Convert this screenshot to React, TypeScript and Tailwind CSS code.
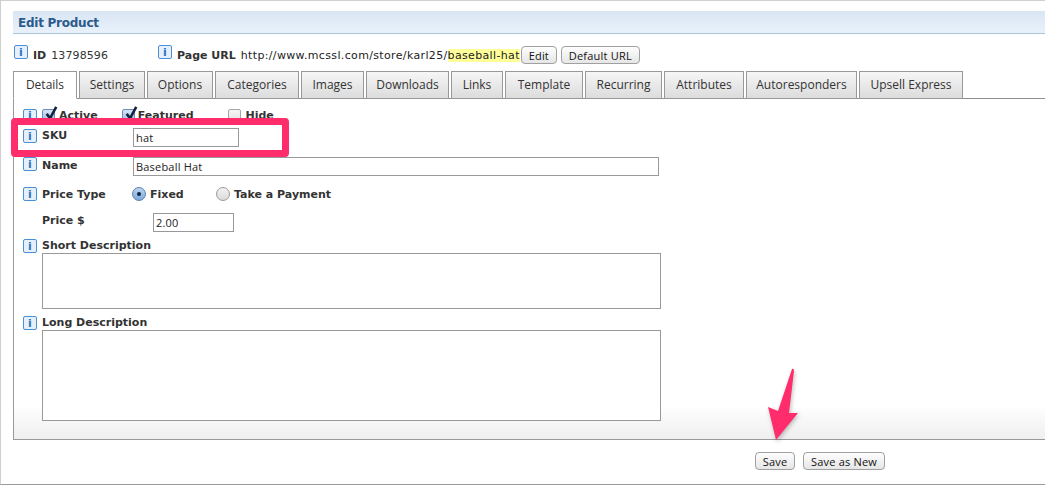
const tabs = [
  { label: "Details", w: "w-[64px]" },
  { label: "Settings", w: "w-[66px]" },
  { label: "Options", w: "w-[66px]" },
  { label: "Categories", w: "w-[84px]" },
  { label: "Images", w: "w-[63px]" },
  { label: "Downloads", w: "w-[83px]" },
  { label: "Links", w: "w-[52px]" },
  { label: "Template", w: "w-[78px]" },
  { label: "Recurring", w: "w-[77px]" },
  { label: "Attributes", w: "w-[80px]" },
  { label: "Autoresponders", w: "w-[111px]" },
  { label: "Upsell Express", w: "w-[104px]" },
];

function InfoIcon({ className = "" }: { className?: string }) {
  return (
    <span className={`flex h-[14px] w-[14px] shrink-0 items-center justify-center rounded-[2px] border border-[#4a90d6] bg-[#e6f0fb] font-['DejaVu_Sans',sans-serif] text-[11px] leading-none font-bold text-[#2f74bd] ${className}`}>
      i
    </span>
  );
}

function Checkbox({ checked }: { checked?: boolean }) {
  return (
    <span className={`relative block h-[13px] w-[13px] shrink-0 rounded-[2px] border ${checked ? "border-[#6d8db5] bg-gradient-to-b from-[#d5e4f5] to-[#9dbde4]" : "border-[#a5a5a5] bg-gradient-to-b from-[#f6f6f6] to-[#e2e2e2]"}`}>
      {checked && (
        <svg viewBox="0 0 16 18" className="absolute -top-[5px] left-[1px] h-[16px] w-[14px]">
          <path d="M3 10 L7 15 L14 2" fill="none" stroke="#10233f" strokeWidth="3" />
        </svg>
      )}
    </span>
  );
}

function Radio({ checked }: { checked?: boolean }) {
  return checked ? (
    <span className="flex h-[14px] w-[14px] shrink-0 items-center justify-center rounded-full border border-[#5f7fa8] bg-gradient-to-b from-[#bcd4f0] to-[#7ea8dc]">
      <span className="h-[4px] w-[4px] rounded-full bg-[#10233f]" />
    </span>
  ) : (
    <span className="h-[14px] w-[14px] shrink-0 rounded-full border border-[#9a9a9a] bg-gradient-to-b from-[#f2f2f2] to-[#dcdcdc]" />
  );
}

function Label({ children }: { children: React.ReactNode }) {
  return <span className="block text-[11px] leading-[14px] font-bold text-[#333]">{children}</span>;
}

function MacButton({ children, w }: { children: React.ReactNode; w: string }) {
  return (
    <button className={`h-[18px] ${w} rounded-[4px] border border-[#a0a0a0] bg-gradient-to-b from-[#fefefe] to-[#e6e6e6] font-['Open_Sans',sans-serif] text-[11px] leading-none tracking-[0.2px] text-[#111]`}>
      {children}
    </button>
  );
}

const inputClass = "h-[19px] border border-[#999] px-[2px] font-['Open_Sans',sans-serif] text-[11px] tracking-[0.2px] text-[#222]";

export default function App() {
  return (
    <div className="relative h-[485px] w-full overflow-hidden border-t border-b border-l border-t-[#cfcfcf] border-b-[#999] border-l-[#cfcfcf] bg-white pt-[10px] pl-[12px] font-['DejaVu_Sans',sans-serif]">
      {/* title bar */}
      <div className="flex h-[23px] items-center border-b border-[#a9c4d9] bg-gradient-to-b from-[#d8e5f3] to-[#e9f2fb] pt-[1px] pl-[5px] text-[12px] font-bold tracking-[-0.25px] text-[#2b5a8c]">
        Edit Product
      </div>

      {/* id + url row */}
      <div className="mt-[11px] flex h-[19px] items-start text-[11px] text-[#333]">
        <div className="flex w-[145px] items-start pl-[1px]">
          <InfoIcon />
          <span className="mt-[3px] ml-[5px] font-bold">ID</span>
          <span className="mt-[3px] ml-[5px] tracking-[0.1px]">13798596</span>
        </div>
        <InfoIcon />
        <span className="mt-[3px] ml-[5px] font-bold">Page URL</span>
        <span className="mt-[3px] ml-[5px] tracking-[0.35px] text-[#222]">
          http://www.mcssl.com/store/karl25/<span className="bg-[#ffff99]">baseball-hat</span>
        </span>
        <div className="mt-[1px] ml-[1px] flex gap-[4px]">
          <MacButton w="w-[36px]">Edit</MacButton>
          <MacButton w="w-[79px]">Default URL</MacButton>
        </div>
      </div>

      {/* tabs */}
      <div className="mt-[7px] flex h-[28px] gap-[2px] border-b border-[#8e8e8e]">
        {tabs.map((t, i) => (
          <div
            key={t.label}
            className={`${t.w} flex h-[28px] shrink-0 items-center justify-center border border-[#999] font-['Open_Sans',sans-serif] text-[12px] text-[#333] ${
              i === 0 ? "border-b-white bg-white" : "bg-gradient-to-b from-[#f6f6f6] to-[#dcdcdc]"
            }`}
          >
            {t.label}
          </div>
        ))}
      </div>

      {/* panel */}
      <div className="h-[341px] border-b border-l border-[#999] bg-gradient-to-b from-white from-[90%] to-[#efefef] pt-[8px] pl-[9px]">
        <div className="flex h-[17px] items-center">
          <InfoIcon />
          <span className="mr-[4px] ml-[5px]"><Checkbox checked /></span>
          <Label>Active</Label>
          <span className="mr-[3px] ml-[24px]"><Checkbox checked /></span>
          <Label>Featured</Label>
          <span className="mr-[5px] ml-[34px]"><Checkbox /></span>
          <Label>Hide</Label>
        </div>

        <div className="mt-[4px] flex h-[19px] items-start">
          <InfoIcon className="mt-[1px]" />
          <span className="mt-[1px] ml-[5px] w-[91px]"><Label>SKU</Label></span>
          <input readOnly value="hat" className={`${inputClass} w-[106px]`} />
        </div>

        <div className="mt-[10px] flex h-[19px] items-start">
          <InfoIcon />
          <span className="mt-[2px] ml-[5px] w-[91px]"><Label>Name</Label></span>
          <input readOnly value="Baseball Hat" className={`${inputClass} w-[526px]`} />
        </div>

        <div className="mt-[10px] flex h-[16px] items-center">
          <InfoIcon />
          <span className="mt-[1px] ml-[5px] w-[90px]"><Label>Price Type</Label></span>
          <Radio checked />
          <span className="mt-[1px] ml-[4px] w-[66px]"><Label>Fixed</Label></span>
          <Radio />
          <span className="mt-[1px] ml-[4px]"><Label>Take a Payment</Label></span>
        </div>

        <div className="mt-[11px] flex h-[20px] items-start pl-[19px]">
          <span className="mt-[1px] w-[111px]"><Label>Price $</Label></span>
          <input readOnly value="2.00" className={`${inputClass} w-[81px]`} />
        </div>

        <div className="mt-[6px] flex h-[14px] items-center">
          <InfoIcon />
          <span className="ml-[5px]"><Label>Short Description</Label></span>
        </div>
        <div className="pl-[19px]">
          <textarea readOnly className="block h-[56px] w-[619px] resize-none border border-[#999] bg-white" />
        </div>

        <div className="mt-[7px] flex h-[14px] items-center">
          <InfoIcon />
          <span className="ml-[5px]"><Label>Long Description</Label></span>
        </div>
        <div className="pl-[19px]">
          <textarea readOnly className="block h-[91px] w-[619px] resize-none border border-[#999] bg-white" />
        </div>
      </div>

      {/* footer buttons */}
      <div className="mt-[12px] flex gap-[8px] pl-[742px]">
        <MacButton w="w-[40px]">Save</MacButton>
        <MacButton w="w-[82px]">Save as New</MacButton>
      </div>

      {/* annotation overlays */}
      <div className="absolute top-[117px] left-[10px] h-[39px] w-[278px] rounded-[4px] border-[7px] border-[#ff2d6b]" />
      <svg viewBox="0 0 40 80" className="absolute top-[366px] left-[763px] h-[80px] w-[40px] drop-shadow-[1px_2px_2px_rgba(0,0,0,0.25)]">
        <path d="M28 2 Q30 1 30 4 L25 46 L34 46 L12 73 L4 40 L14 44 Z" fill="#ff2d6b" />
      </svg>
    </div>
  );
}
